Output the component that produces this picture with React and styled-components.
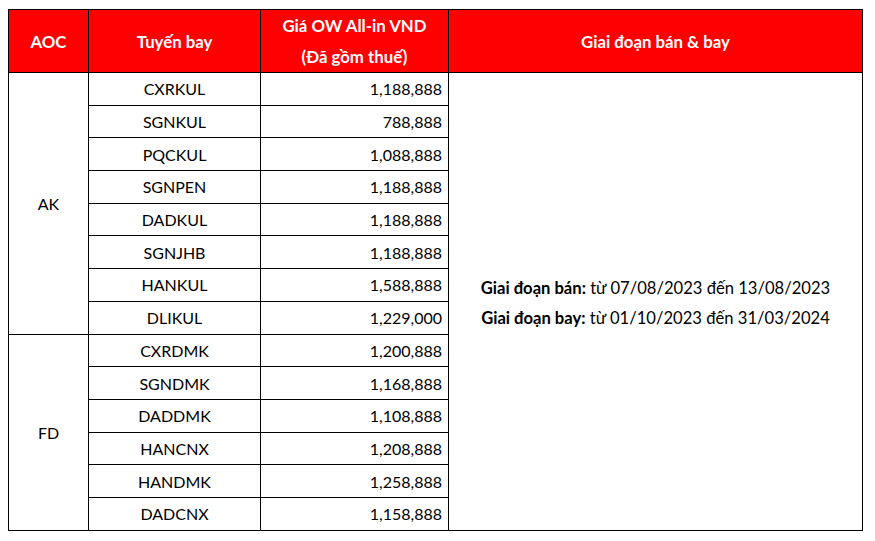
import styled, { createGlobalStyle } from 'styled-components';

const GlobalStyle = createGlobalStyle`
	body {
		margin: 9px 8px;
		background: #fff;
		font-family: Lato, 'Open Sans', sans-serif;
		color: #000;
	}
`;

const routes = [
	{ aoc: 'AK', items: [
		['CXRKUL', '1,188,888'],
		['SGNKUL', '788,888'],
		['PQCKUL', '1,088,888'],
		['SGNPEN', '1,188,888'],
		['DADKUL', '1,188,888'],
		['SGNJHB', '1,188,888'],
		['HANKUL', '1,588,888'],
		['DLIKUL', '1,229,000'],
	] },
	{ aoc: 'FD', items: [
		['CXRDMK', '1,200,888'],
		['SGNDMK', '1,168,888'],
		['DADDMK', '1,108,888'],
		['HANCNX', '1,208,888'],
		['HANDMK', '1,258,888'],
		['DADCNX', '1,158,888'],
	] },
];

const totalRows = routes.reduce((n, g) => n + g.items.length, 0);

export default function App() {
	return (
		<>
			<GlobalStyle />
			<Table>
				<colgroup>
					<col style={{ width: 80 }} />
					<col style={{ width: 172 }} />
					<col style={{ width: 188 }} />
					<col style={{ width: 414 }} />
				</colgroup>
				<thead>
					<HeadRow>
						<HeadCell>AOC</HeadCell>
						<HeadCell>Tuyến bay</HeadCell>
						<HeadCell>
							Giá OW All-in VND
							<br />
							(Đã gồm thuế)
						</HeadCell>
						<HeadCell>Giai đoạn bán &amp; bay</HeadCell>
					</HeadRow>
				</thead>
				<tbody>
					{routes.map((group, gi) =>
						group.items.map(([route, price], i) => (
							<Row key={route}>
								{i === 0 && <Cell rowSpan={group.items.length}>{group.aoc}</Cell>}
								<Cell>{route}</Cell>
								<Cell $align='right'>{price}</Cell>
								{gi === 0 && i === 0 && (
									<PeriodCell rowSpan={totalRows}>
										<PeriodLine>
											<b>Giai đoạn bán:</b> từ 07/08/2023 đến 13/08/2023
										</PeriodLine>
										<PeriodLine>
											<b>Giai đoạn bay:</b> từ 01/10/2023 đến 31/03/2024
										</PeriodLine>
									</PeriodCell>
								)}
							</Row>
						))
					)}
				</tbody>
			</Table>
		</>
	);
}

const Table = styled.table`
	border-collapse: collapse;
	table-layout: fixed;
	width: 854px;
	font-size: 16px;
`;

const HeadRow = styled.tr`
	height: 63px;
	background: #ff0000;
`;

const HeadCell = styled.th`
	border: 1px solid #000;
	padding: 0 4px;
	color: #fff;
	font-weight: 700;
	font-size: 16.8px;
	line-height: 31px;
	text-align: center;
	vertical-align: middle;
`;

const Row = styled.tr`
	height: 32.7px;
`;

const Cell = styled.td`
	border: 1px solid #000;
	padding: 0 6px;
	text-align: ${(p) => p.$align || 'center'};
	vertical-align: middle;
	white-space: nowrap;
`;

const PeriodCell = styled.td`
	border: 1px solid #000;
	padding: 4px 0 0;
	text-align: center;
	vertical-align: middle;
	font-size: 16.6px;
`;

const PeriodLine = styled.div`
	line-height: 30px;

	b {
		font-weight: 700;
	}
`;
